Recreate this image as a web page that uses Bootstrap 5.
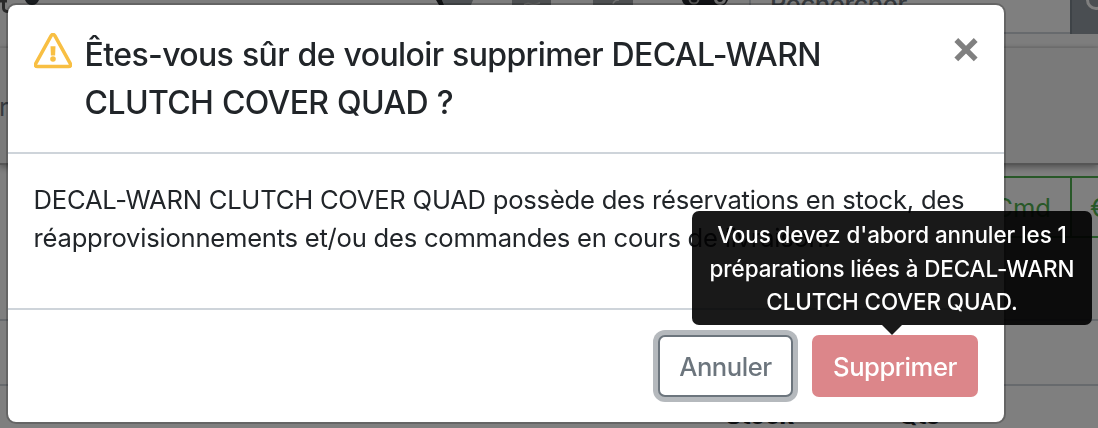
<!DOCTYPE html>
<html lang="fr">
<head>
<meta charset="utf-8">
<title>Suppression</title>
<link href="https://cdn.jsdelivr.net/npm/bootstrap@5.3.0/dist/css/bootstrap.min.css" rel="stylesheet">
<style>
html, body { height: 428px; overflow: hidden; }
body { font-family: Inter, "Liberation Sans", sans-serif; font-size: 25.6px; line-height: 1.5; color: #212529; }
.page { height: 428px; }
.topbar { height: 48px; background: #fbfbfb; border-bottom: 2px solid #f0f0f0; }
.topbar .strip { width: 749px; height: 34px; }
.search { height: 34px; width: 321px; border: 2px solid #ced4da; border-top: 0; border-right: 0; color: #6c757d; padding-left: 19px; line-height: 1; background: #fff; }
.search span { display: block; margin-top: -9px; letter-spacing: -.4px; font-weight: 450; }
.search-btn { height: 34px; background: #959da4; width: 28px; border-left: 2px solid #7d868e; }
.subbar { height: 117px; background: #f5f5f5; border-bottom: 2px solid #aaa; box-shadow: 0 2px 7px rgba(0,0,0,.4); color: #6c757d; z-index: 1; }
.subbar span { margin-left: -1px; margin-top: 40px; line-height: 38px; }
.tools { height: 156px; padding-top: 11px; border-bottom: 2px solid #ced4da; }
.tools .cell-g { height: 62px; border: 2px solid #50b050; color: #50b050; line-height: 60px; }
.cell-cmd { width: 160px; padding-right: 19px; text-align: right; }
.cell-eur { width: 28px; padding-left: 18px; margin-left: -2px; border-right: 0 !important; overflow: hidden; }
.rowline { height: 65px; border-bottom: 2px solid #ced4da; }
.heads { font-weight: 700; line-height: 38px; padding-left: 725px; padding-top: 10px; height: 42px; color: #212529; }
.heads span:first-child { width: 173px; letter-spacing: -.6px; }
.heads span:last-child { letter-spacing: -1px; }
.shade { background: rgba(0,0,0,.5); z-index: 5; }
.dialog { left: 6px; top: 3px; width: 1000px; height: 421px; border: 2px solid rgba(0,0,0,.2); border-radius: 10px; background: #fff; background-clip: padding-box; z-index: 10; }
.dlg-head { height: 149px; padding: 25.6px; border-bottom: 2px solid #ced4da; }
.dlg-head h5 { font-size: 32px; line-height: 48px; font-weight: 540; letter-spacing: -.63px; word-spacing: .8px; margin: 0 0 0 13px; white-space: nowrap; }
.warn-ico { width: 38px; height: 36px; margin-top: 2px; }
.close-ico { width: 26px; height: 26px; margin: 6px -1px 0 0; }
.dlg-body { height: 156px; padding: 27px 25.6px 0; line-height: 38.4px; letter-spacing: -.24px; border-bottom: 2px solid #ced4da; white-space: nowrap; }
.dlg-foot { padding: 25px 26px; gap: 19px; }
.dlg-foot .btn { height: 62px; font-size: 25.6px; line-height: 38px; letter-spacing: -.45px; padding: 11px 0 9px; border-width: 2px; border-radius: 7px; font-weight: 450; }
.btn-cancel { width: 135px; color: #6c757d; border-color: #6c757d; background: #fff; box-shadow: 0 0 0 5px #b5b9bd; }
.btn-del { width: 166px; color: #fff; background: #dc868a; border-color: #dc868a; }
.tip { left: 692px; top: 211px; width: 400px; height: 114px; background: rgba(0,0,0,.9); border-radius: 7px; color: #fff; font-size: 22.4px; line-height: 33.6px; letter-spacing: -.06px; padding-top: 7px; text-align: center; z-index: 20; white-space: nowrap; font-weight: 450; }
.tip::after { content: ""; position: absolute; left: 190px; top: 114px; border: 10px solid transparent; border-bottom: 0; border-top-color: rgba(0,0,0,.9); }
</style>
</head>
<body>
<div class="page d-flex flex-column">
  <div class="topbar d-flex">
    <svg class="strip" viewBox="0 0 749 34"><path d="M3.500 0v8q0 3.500 5 3.500M0 1h7" fill="none" stroke="#555" stroke-width="3"/><path d="M25 0h14q-2 5-7 5t-7-5z" fill="#343a40"/><path d="M442 0h31l-2 5h-27z" fill="#999fa5"/><path d="M436 0h6l2 5h-5z" fill="#212529"/><path d="M512 0h39v5h-39zM593 0h40v5h-40z" fill="#9a9fa3"/><path d="M524 4.500q4-1.500 7-.5t9-1M613 4q1-4 6-4" fill="none" stroke="#ddd" stroke-width="1.500"/><path d="M682 0h46q-2 5-5 5h-36q-4 0-5-5z" fill="#22252a"/><circle cx="694" cy="-1" r="4.500" fill="none" stroke="#aaa" stroke-width="2"/><circle cx="720" cy="-1" r="4.500" fill="none" stroke="#ddd" stroke-width="3"/></svg>
    <div class="search"><span>Rechercher</span></div>
    <div class="search-btn"><svg class="d-block" width="26" height="20" viewBox="0 0 26 20"><circle cx="24" cy="0" r="8.500" fill="none" stroke="#fff" stroke-width="3"/></svg></div>
  </div>
  <div class="subbar d-flex"><span>r</span></div>
  <div class="tools d-flex justify-content-end"><div class="cell-g cell-cmd">Cmd</div><div class="cell-g cell-eur">€</div></div>
  <div class="rowline"></div>
  <div class="heads d-flex"><span>Stock</span><span>Qté</span></div>
</div>
<div class="shade position-fixed top-0 start-0 w-100 h-100"></div>
<div class="dialog position-absolute" role="dialog">
  <div class="dlg-head d-flex">
    <svg class="warn-ico flex-shrink-0" viewBox="0 0 38 36"><path d="M17.200 2.700Q19 0 20.800 2.700L36.300 30.600Q37.500 33.500 34.500 33.500H3.500Q.500 33.500 1.700 30.600Z" fill="none" stroke="#f8bf43" stroke-width="3.500" stroke-linejoin="round"/><path d="M16.500 13.200h5l-.4 9.300h-4.200z" fill="#f8bf43"/><circle cx="19" cy="26" r="2.800" fill="#f8bf43"/></svg>
    <h5>Êtes-vous sûr de vouloir supprimer DECAL-WARN<br>CLUTCH COVER QUAD ?</h5>
    <svg class="close-ico ms-auto" viewBox="0 0 26 26"><path d="M3.300 3l19.400 19.400M22.700 3l-19.400 19.400" stroke="#808080" stroke-width="5.400"/></svg>
  </div>
  <div class="dlg-body">DECAL-WARN CLUTCH COVER QUAD possède des réservations en stock, des<br>réapprovisionnements et/ou des commandes en cours de livraison.</div>
  <div class="dlg-foot d-flex justify-content-end">
    <button class="btn btn-cancel">Annuler</button>
    <button class="btn btn-del">Supprimer</button>
  </div>
</div>
<div class="tip position-absolute" role="tooltip">Vous devez d'abord annuler les 1<br>préparations liées à DECAL-WARN<br>CLUTCH COVER QUAD.</div>
<script src="https://cdn.jsdelivr.net/npm/bootstrap@5.3.0/dist/js/bootstrap.bundle.min.js"></script>
</body>
</html>
